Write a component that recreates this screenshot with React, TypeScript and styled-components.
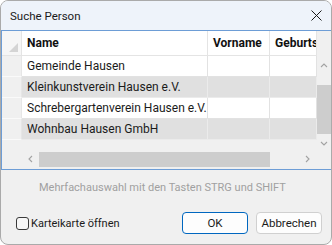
import React from 'react';
import styled, { createGlobalStyle } from 'styled-components';

const GlobalStyle = createGlobalStyle`
  html, body {
    margin: 0;
    padding: 0;
    background: #ffffff;
  }
  body {
    font-family: Roboto, "Noto Sans", "Liberation Sans", sans-serif;
    font-size: 12px;
    color: #1b1b1b;
  }
`

const Dialog = styled.div`
  width: 332px;
  height: 245px;
  box-sizing: border-box;
  border: 1px solid #aaaaaa;
  border-radius: 8px;
  overflow: hidden;
  background: #f0f0f0;
  display: flex;
  flex-direction: column;
`

const TitleBar = styled.div`
  height: 29px;
  flex: none;
  display: flex;
  align-items: center;
  justify-content: space-between;
  padding: 0 9px;
  background: #eef3fa;
`

const Title = styled.span`
  font-size: 11.5px;
  color: #1a1a1a;
`

const GridFrame = styled.div`
  height: 140px;
  flex: none;
  box-sizing: border-box;
  border: 1px solid #6d9dd6;
  border-right: none;
  display: grid;
  grid-template-columns: 315px 1fr;
  grid-template-rows: 1fr 20px;
`

const Table = styled.div`
  grid-column: 1;
  grid-row: 1;
  overflow: hidden;
  display: flex;
  flex-direction: column;
`

const Row = styled.div<{ $head?: boolean }>`
  display: grid;
  grid-template-columns: 20px 186px 62px 47px;
  height: ${p => (p.$head ? 25 : 21)}px;
  flex: none;
`

const Corner = styled.div`
  box-sizing: border-box;
  background: #f6f6f6;
  border-right: 1px solid #e4e4e4;
  border-bottom: 1px solid #e4e4e4;
  display: flex;
  align-items: flex-end;
  justify-content: flex-end;
  padding: 0 3px 3px 0;
`

const HeadCell = styled.div`
  box-sizing: border-box;
  background: #ffffff;
  border-right: 1px solid #e4e4e4;
  border-bottom: 1px solid #e4e4e4;
  display: flex;
  align-items: center;
  padding-left: 5px;
  font-weight: 700;
  color: #111111;
  white-space: nowrap;
  overflow: hidden;
`

const RowHead = styled.div`
  box-sizing: border-box;
  background: #f0f0f0;
  border-right: 1px solid #e6e6e6;
  border-bottom: 1px solid #fafafa;
`

const Cell = styled.div<{ $shade: boolean }>`
  box-sizing: border-box;
  background: ${p => (p.$shade ? '#e0e0e0' : '#ffffff')};
  border-right: 1px solid ${p => (p.$shade ? '#ebebeb' : '#e2e2e2')};
  border-bottom: 1px solid ${p => (p.$shade ? '#ebebeb' : '#e2e2e2')};
  display: flex;
  align-items: center;
  padding-left: 5px;
  white-space: nowrap;
  overflow: hidden;
`

const VScroll = styled.div`
  grid-column: 2;
  grid-row: 1 / 3;
  display: flex;
  flex-direction: column;
  background: #f0f0f0;
`

const HScroll = styled.div`
  grid-column: 1;
  grid-row: 2;
  display: flex;
  background: #f0f0f0;
`

const ArrowBtn = styled.div<{ $size: number; $vertical?: boolean }>`
  flex: none;
  ${p => (p.$vertical ? `height: ${p.$size}px;` : `width: ${p.$size}px;`)}
  display: flex;
  align-items: center;
  justify-content: center;
`

const Spacer = styled.div<{ $size: number; $vertical?: boolean }>`
  flex: none;
  ${p => (p.$vertical ? `height: ${p.$size}px;` : `width: ${p.$size}px;`)}
`

const Track = styled.div<{ $vertical?: boolean }>`
  display: flex;
  flex-direction: ${p => (p.$vertical ? 'column' : 'row')};
  ${p => (p.$vertical ? 'height: 60px; flex: none;' : 'flex: 1;')}
`

const Thumb = styled.div<{ $vertical?: boolean }>`
  background: #cdcdcd;
  ${p => (p.$vertical
    ? 'margin-top: 10px; height: 49px;'
    : 'margin-top: 3px; height: 15px; width: 231px;')}
`

const Hint = styled.div`
  margin-top: 10px;
  padding-left: 38px;
  line-height: 16px;
  font-size: 11px;
  color: #a0a0a0;
  white-space: nowrap;
`

const Footer = styled.div`
  margin-top: 16px;
  height: 22px;
  display: flex;
  align-items: center;
  padding: 0 9px 0 15px;
`

const CheckLabel = styled.label`
  display: flex;
  align-items: center;
  gap: 2px;
  flex: 1;
  font-size: 11px;
  color: #1b1b1b;
`

const Box = styled.span`
  width: 13px;
  height: 13px;
  box-sizing: border-box;
  border: 1px solid #3a3a3a;
  border-radius: 3px;
  background: #f7f7f7;
`

const Button = styled.button<{ $primary?: boolean }>`
  width: 66px;
  height: 22px;
  box-sizing: border-box;
  margin-left: ${p => (p.$primary ? 0 : 8)}px;
  padding: 0;
  font: inherit;
  font-size: 11.5px;
  color: #1b1b1b;
  background: #fdfdfd;
  border: 1px solid ${p => (p.$primary ? '#0067c0' : '#d0d0d0')};
  border-radius: 4px;
`

const Chevron = ({ dir }: { dir: 'up' | 'down' | 'left' | 'right' }) => {
  const pts = {
    up: '1,5 4,2 7,5',
    down: '1,2 4,5 7,2',
    left: '5,1 2,4 5,7',
    right: '2,1 5,4 2,7',
  }[dir]
  return (
    <svg width="8" height="8" viewBox="0 0 8 8">
      <polyline points={pts} fill="none" stroke="#a3a3a3" strokeWidth="1.1" />
    </svg>
  )
}

const rows = [
  'Gemeinde Hausen',
  'Kleinkunstverein Hausen e.V.',
  'Schrebergartenverein Hausen e.V.',
  'Wohnbau Hausen GmbH',
]

function App() {
  return (
    <>
      <GlobalStyle />
      <Dialog>
        <TitleBar>
          <Title>Suche Person</Title>
          <svg width="11" height="11" viewBox="0 0 11 11">
            <path d="M0.5 0.5 L10.5 10.5 M10.5 0.5 L0.5 10.5" stroke="#1a1a1a" strokeWidth="1" />
          </svg>
        </TitleBar>
        <GridFrame>
          <Table>
            <Row $head>
              <Corner>
                <svg width="9" height="9" viewBox="0 0 9 9">
                  <polygon points="9,0 9,9 0,9" fill="#d4d4d4" />
                </svg>
              </Corner>
              <HeadCell>Name</HeadCell>
              <HeadCell>Vorname</HeadCell>
              <HeadCell>Geburtsdatum</HeadCell>
            </Row>
            {rows.map((name, i) => (
              <Row key={name}>
                <RowHead />
                <Cell $shade={i % 2 === 1}>{name}</Cell>
                <Cell $shade={i % 2 === 1} />
                <Cell $shade={i % 2 === 1} />
              </Row>
            ))}
          </Table>
          <VScroll>
            <Spacer $vertical $size={25} />
            <ArrowBtn $vertical $size={19}><Chevron dir="up" /></ArrowBtn>
            <Track $vertical><Thumb $vertical /></Track>
            <ArrowBtn $vertical $size={18}><Chevron dir="down" /></ArrowBtn>
          </VScroll>
          <HScroll>
            <Spacer $size={20} />
            <ArrowBtn $size={17}><Chevron dir="left" /></ArrowBtn>
            <Track><Thumb /></Track>
            <ArrowBtn $size={18}><Chevron dir="right" /></ArrowBtn>
          </HScroll>
        </GridFrame>
        <Hint>Mehrfachauswahl mit den Tasten STRG und SHIFT</Hint>
        <Footer>
          <CheckLabel>
            <Box />
            Karteikarte öffnen
          </CheckLabel>
          <Button $primary>OK</Button>
          <Button>Abbrechen</Button>
        </Footer>
      </Dialog>
    </>
  )
}

export default App
